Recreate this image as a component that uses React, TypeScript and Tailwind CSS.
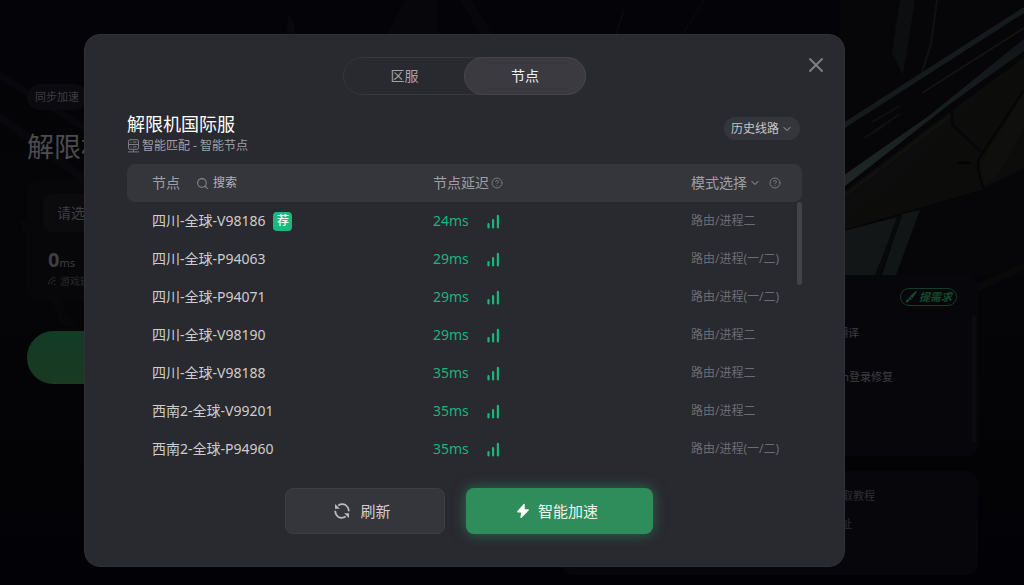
import { ReactNode, useState } from "react";
import { ChevronDown, CircleHelp, Search, X } from "lucide-react";

type NodeRow = {
  name: string;
  ping: number;
  mode: string;
  recommended?: boolean;
};

const nodes: NodeRow[] = [
  { name: "四川-全球-V98186", ping: 24, mode: "路由/进程二", recommended: true },
  { name: "四川-全球-P94063", ping: 29, mode: "路由/进程(一/二)" },
  { name: "四川-全球-P94071", ping: 29, mode: "路由/进程(一/二)" },
  { name: "四川-全球-V98190", ping: 29, mode: "路由/进程二" },
  { name: "四川-全球-V98188", ping: 35, mode: "路由/进程二" },
  { name: "西南2-全球-V99201", ping: 35, mode: "路由/进程二" },
  { name: "西南2-全球-P94960", ping: 35, mode: "路由/进程(一/二)" },
];

const SignalIcon = () => (
  <svg width="13" height="15" viewBox="0 0 13 15" aria-hidden="true">
    <g stroke="#19b57b" strokeWidth="2.2" strokeLinecap="round">
      <path d="M1.5 10.2v3.2" />
      <path d="M6.1 6v7.400" />
      <path d="M10.900 1.800v11.600" />
    </g>
  </svg>
);

const ServerIcon = () => (
  <svg width="13" height="14" viewBox="0 0 13 14" fill="none" stroke="#7d7e82" aria-hidden="true">
    <rect x="1.5" y="0.7" width="10" height="9.6" rx="1.5" />
    <path d="M1.5 5.5h10M3.5 3.1h1M6 3.1h3.5M3.5 7.9h1M6 7.9h3.5M6.5 10.3v2.4M0.8 12.9h11.4" />
  </svg>
);

const RefreshIcon = () => (
  <svg width="16" height="16" viewBox="0 0 16 16" fill="none" stroke="#bcbcbf" strokeWidth="1.7" aria-hidden="true">
    <path d="M4.2 2.4Q8 .1 11.700 2.100 14.700 4.300 14.800 8.300M11.800 13.600Q8 15.900 4.300 13.900 1.300 11.700 1.200 7.700" />
    <path d="M1 1v4.800h4.800zM15 15v-4.800h-4.800z" fill="#bcbcbf" stroke="none" />
  </svg>
);

const BoltIcon = () => (
  <svg width="14" height="16" viewBox="0 0 14 16" fill="#fff" aria-hidden="true">
    <path d="M7.600 1 1.300 8.300q-.6.9.5 1.100h3.200L4.500 14.500q.2 1 1 .3L12.700 7.400q.5-.9-.5-1.100H8.700L8.800 1.400Q8.500.4 7.600 1z" />
  </svg>
);

const BrushIcon = () => (
  <svg width="12" height="12" viewBox="0 0 12 12" fill="#16482d" aria-hidden="true">
    <path d="M11.500.4Q12 .8 11.600 1.500L7.500 7.200 5 5.200 10.300.6Q11 .1 11.500.4zM4.500 5.700 6.900 7.800Q6.500 9 5.100 9.100L3.300 7.400Q3.400 6.200 4.500 5.700zM2.700 7.900 4.500 9.600Q3.700 11.700.6 11.500 1 11 1 10 1.300 8.200 2.700 7.900z" />
  </svg>
);

// dimmed key art behind the page
const Backdrop = () => (
  <svg
    className="absolute inset-0 h-full w-full"
    viewBox="0 0 1024 585"
    preserveAspectRatio="xMidYMid slice"
    aria-hidden="true"
  >
    <defs>
      <linearGradient id="base" x1="0" y1="0" x2="0" y2="1">
        <stop offset="0" stopColor="#040408" />
        <stop offset="0.5" stopColor="#050507" />
        <stop offset="1" stopColor="#020206" />
      </linearGradient>
      <linearGradient id="beam" x1="0" y1="1" x2="1" y2="0">
        <stop offset="0" stopColor="#1f2726" />
        <stop offset="1" stopColor="#111518" />
      </linearGradient>
      <linearGradient id="hull" x1="0" y1="0" x2="1" y2="1">
        <stop offset="0" stopColor="#0e0e0e" />
        <stop offset="1" stopColor="#0b0b0a" />
      </linearGradient>
    </defs>
    <rect width="1024" height="585" fill="url(#base)" />
    <path d="M0 72 84 124v7L0 80zM0 112l84 62v10L0 122z" fill="#08080c" />
    <path d="M18 218 28 222 60 300 76 326h-14z" fill="#07070a" />
    <path d="M387 34 405 0h33v34zM460 0l20 34h12L472 0z" fill="#07070b" />
    <path d="M288 14q6 4 7 20h-8z" fill="#09090d" />
    <path d="M624 10l-8 24M683 34 704 0" stroke="#0b0d11" />
    <path d="M840 0h184v275H840z" fill="#060608" />
    <path d="M900 0h15l-12 75-11-22z" fill="#0c0e10" />
    <path d="M937 0 931 44 922 72" stroke="#0f1113" strokeWidth="2" fill="none" />
    <path d="M840 195 950 112 1024 58v110l-44 22-130 38-10 3z" fill="url(#hull)" />
    <path d="M922 93 1024 28M840 199 950 116" stroke="#131312" strokeWidth="2" />
    <path d="M840 125 1024 7v6L840 131z" fill="#151a1c" />
    <path d="M840 178 930 115 1024 39v12L951 103 840 190z" fill="url(#beam)" />
    <path d="M872 122l28-16M874 131l26-17M864 138l20-12" stroke="#0e1012" strokeWidth="2" />
    <path d="M952 104v20l29 28" stroke="#070707" strokeWidth="3" fill="none" />
    <path d="M1024 92 980 164l5 22 14-12 25-46z" fill="#0f0f0e" />
    <path d="M1024 90 978 160v10l5 18" stroke="#050505" strokeWidth="2" fill="none" />
    <path d="M958 163h12" stroke="#050505" strokeWidth="3" />
    <path d="M840 232l57-15-20 58h-37z" fill="#131616" />
    <path d="M902 214l18-4-24 65h-14z" fill="#121515" />
    <path d="M898 216l4 0-22 59h-5z" fill="#080909" />
    <path d="M978 284l46-22v8l-46 22z" fill="#090909" />
  </svg>
);

const HelpButton = ({ label }: { label: string }) => (
  <button type="button" aria-label={label} className="text-[#77787c]">
    <CircleHelp size={12} strokeWidth={2} />
  </button>
);

const TabButton = ({
  active,
  onClick,
  children,
}: {
  active: boolean;
  onClick: () => void;
  children: ReactNode;
}) => (
  <button
    type="button"
    role="tab"
    aria-selected={active}
    onClick={onClick}
    className={
      active
        ? "-m-px w-[122px] rounded-full border border-[#47474c] bg-[#3a3a40] text-[#f0f0f0]"
        : "w-[121px] rounded-full text-[#a5a5a8]"
    }
  >
    {children}
  </button>
);

const HomePage = () => (
  <div className="relative flex items-start justify-between pt-[84px] pr-[46px] pl-[27px] leading-5 text-[#3e3e42]">
    <div className="w-[240px]">
      <span className="inline-flex h-[26px] items-center rounded-full bg-[#0a0a0f] px-2 text-[11px]">
        同步加速
      </span>
      <h1 className="mt-3 text-[27px] leading-[50px] text-[#4c4c4e]">解限机</h1>
      <section className="mt-2 rounded-xl bg-[#07070a] p-4 pt-[14px] pb-3">
        <button
          type="button"
          className="flex h-[38px] w-full items-center rounded-lg bg-[#0b0b0e] px-[14px] text-sm"
        >
          请选择区服
        </button>
        <p className="mt-4 px-[5px]">
          <b className="text-xl leading-6">0</b>
          <span className="text-[11px]">ms</span>
        </p>
        <p className="flex items-center gap-1 px-[5px] text-[10px] leading-4 text-[#29292d]">
          <svg width="8" height="8" viewBox="0 0 8 8" fill="none" stroke="#2c2c30" aria-hidden="true">
            <path d="M.5 7.500Q1 1 7.500.5M3 7.500Q3.500 4 7.500 3M6 7.500h1.500" />
          </svg>
          游戏延迟
        </p>
      </section>
      <button
        type="button"
        aria-label="加速"
        className="mt-[30px] h-[53px] w-full rounded-full bg-linear-to-b from-[#123b27] to-[#1a3a21]"
      />
    </div>

    <div className="mt-[191px] flex w-[416px] flex-col gap-[15px]">
      <section className="flex h-[181px] rounded-xl bg-[#07070b] pl-4">
        <div className="flex-1 pt-[13px]">
          <div className="flex justify-end">
            <button
              type="button"
              className="flex h-[18px] items-center gap-[2px] rounded-full border border-[#123d26] px-1 text-[11px] font-bold text-[#16482d] italic"
            >
              <BrushIcon />
              提需求
            </button>
          </div>
          <p className="mt-[17px] w-[281px] text-right text-[11px]">聊天翻译</p>
          <p className="mt-6 w-[315px] text-right text-[11px]">Steam登录修复</p>
        </div>
        <div className="mt-[41px] mr-[2px] ml-[15px] h-[126px] w-1 rounded-full bg-[#0d0d11]" />
      </section>
      <section className="h-[104px] rounded-xl bg-[#07070b] pt-[15px] pl-4 text-[11px] text-[#2e2e32]">
        <p className="w-[297px] text-right">获取教程</p>
        <p className="mt-2 w-[274px] text-right">官网地址</p>
      </section>
    </div>
  </div>
);

const NodeTable = () => (
  <div className="relative mt-2">
    <table className="w-full table-fixed text-left text-sm leading-5">
      <colgroup>
        <col />
        <col className="w-[258px]" />
        <col className="w-[111px]" />
      </colgroup>
      <thead className="text-[#a0a0a3]">
        <tr className="h-[38px]">
          <th className="rounded-l-lg bg-[#35353c] pl-[25px] font-normal">
            <div className="flex items-center gap-4">
              节点
              <button type="button" className="flex items-center gap-1 text-[12px] text-[#b4b4b6]">
                <Search size={13} className="text-[#88898c]" />
                搜索
              </button>
            </div>
          </th>
          <th className="bg-[#35353c] font-normal">
            <div className="flex items-center gap-[2px]">
              节点延迟
              <HelpButton label="节点延迟说明" />
            </div>
          </th>
          <th className="rounded-r-lg bg-[#35353c] font-normal">
            <div className="flex items-center gap-2">
              <button type="button" className="flex items-center gap-[2px]">
                模式选择
                <ChevronDown size={12} />
              </button>
              <HelpButton label="模式说明" />
            </div>
          </th>
        </tr>
      </thead>
      <tbody>
        {nodes.map((node) => (
          <tr key={node.name} className="h-[38px]">
            <td className="pl-[25px] text-[#cdcdcf]">
              <div className="flex items-center gap-2">
                {node.name}
                {node.recommended && (
                  <span className="flex h-[19px] w-[19px] items-center justify-center rounded-sm bg-[#18ba7d] text-[12px] font-medium text-white">
                    荐
                  </span>
                )}
              </div>
            </td>
            <td className="text-[#19b57b]">
              <div className="flex items-center">
                <span className="w-[54px]">{node.ping}ms</span>
                <SignalIcon />
              </div>
            </td>
            <td className="text-[12px] whitespace-nowrap text-[#6c6c71]">{node.mode}</td>
          </tr>
        ))}
      </tbody>
    </table>
    <div className="absolute top-[38px] right-0 h-[83px] w-[5px] rounded-full bg-[#424248]" />
  </div>
);

const NodeDialog = () => {
  const [tab, setTab] = useState<"server" | "node">("node");

  return (
    <div
      role="dialog"
      aria-label="选择节点"
      className="w-full rounded-2xl border border-[#303036] bg-[#292930] pb-8"
    >
      <header className="grid grid-cols-[1fr_auto_1fr] items-start px-4 pt-[18px]">
        <div
          role="tablist"
          className="col-start-2 mt-1 flex h-[38px] rounded-full border border-[#36363b] text-sm"
        >
          <TabButton active={tab === "server"} onClick={() => setTab("server")}>
            区服
          </TabButton>
          <TabButton active={tab === "node"} onClick={() => setTab("node")}>
            节点
          </TabButton>
        </div>
        <button type="button" aria-label="关闭" className="justify-self-end text-[#7e7e83]">
          <X size={24} strokeWidth={2} />
        </button>
      </header>

      <div className="px-[42px]">
        <div className="mt-[17px] flex items-start justify-between">
          <div>
            <h2 className="text-lg leading-6 text-white">解限机国际服</h2>
            <p className="flex items-center gap-[2px] text-[12px] leading-5 text-[#a0a0a3]">
              <ServerIcon />
              智能匹配 - 智能节点
            </p>
          </div>
          <button
            type="button"
            className="mt-[5px] mr-[2px] flex h-[23px] items-center gap-[2px] rounded-full bg-[#35353c] px-[7px] text-[12px] text-[#c6c6c8]"
          >
            历史线路
            <ChevronDown size={12} className="text-[#a6a6aa]" />
          </button>
        </div>

        <NodeTable />

        <div className="mt-5 flex justify-center gap-[21px] pl-2 text-[15px]">
          <button
            type="button"
            className="flex h-[46px] w-[160px] items-center justify-center gap-[10px] rounded-lg border border-[#3d3d43] bg-[#35353c] pr-1 text-[#cfcfd1]"
          >
            <RefreshIcon />
            刷新
          </button>
          <button
            type="button"
            className="flex h-[46px] w-[187px] items-center justify-center gap-2 rounded-lg bg-[#2e8d5b] pr-1 text-[#eef5f1] shadow-[0_0_14px_#2e8d5bb3]"
          >
            <BoltIcon />
            智能加速
          </button>
        </div>
      </div>
    </div>
  );
};

export default function App() {
  return (
    <div className="relative min-h-screen overflow-hidden bg-[#030307] font-['Noto_Sans','Noto_Sans_CJK_SC',sans-serif]">
      <Backdrop />
      <HomePage />
      <div className="absolute inset-0 flex items-start pt-[34px] pr-[179px] pl-[84px]">
        <NodeDialog />
      </div>
    </div>
  );
}
